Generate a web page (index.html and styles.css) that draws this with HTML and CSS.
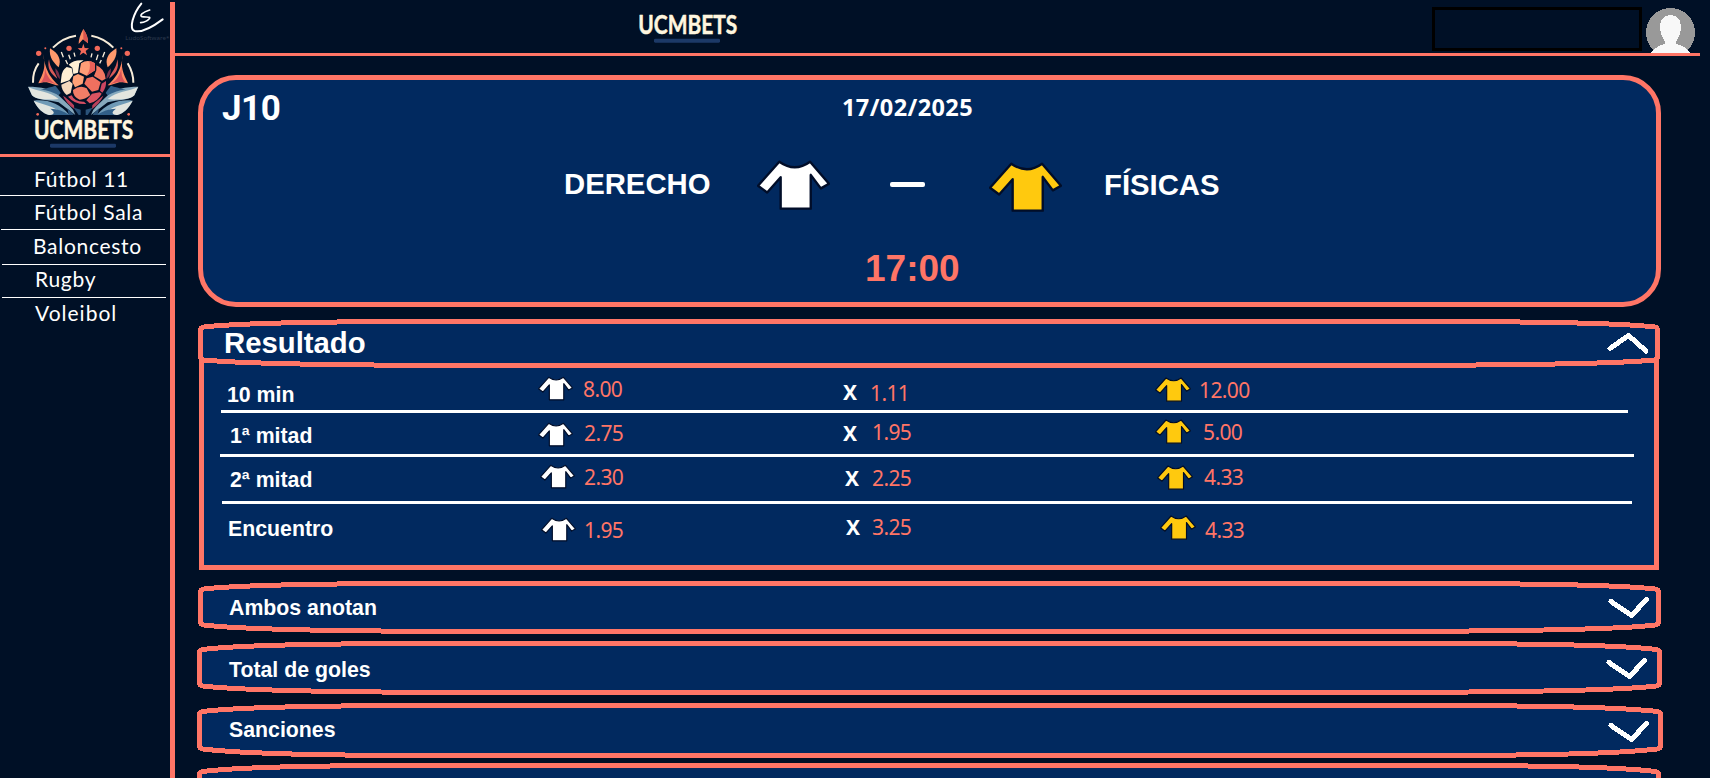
FILE: index.html
```html
<!DOCTYPE html>
<html lang="es">
<head>
<meta charset="utf-8">
<title>UCMBETS</title>
<link rel="stylesheet" href="styles.css">
</head>
<body>
<svg class="defs" width="0" height="0">
  <symbol id="shirt" viewBox="0 0 216 148">
    <path d="M66 5Q112 38 157 5L213 70L189 84L159 44V144H70V51L30 96L3 76Z" stroke="#010d28" stroke-width="7" stroke-linejoin="round"/>
  </symbol>
</svg>
<div class="app">
  <aside class="sidebar">
    <div class="brand">
      <svg width="170" height="154" viewBox="0 0 510 462">
        <g fill="none" stroke="#fff" stroke-linecap="round">
          <path d="M424 11C400 40 385 88 404 93C430 99 468 73 488 58" stroke-width="6"/>
          <path d="M449 30C425 38 418 47 426 50C440 52 455 49 447 57C441 64 430 67 422 68" stroke-width="5"/>
        </g>
        <text x="376" y="119" textLength="132" lengthAdjust="spacingAndGlyphs" class="studio">LudoSoftware*</text>
        <g fill="none" stroke="#f6ecd9" stroke-width="6">
          <path d="M159 143Q188 113 228 107M274 107Q312 114 340 143M99 248Q98 214 116 190M383 190Q400 218 400 248"/>
          <path d="M184 156L190 172M197 180L203 193M206 164L211 178M222 158L225 170M276 160L273 172M294 164L289 180M314 156L308 172M304 180L299 190" stroke-width="4"/>
        </g>
        <g fill="#f2695a">
          <circle cx="116" cy="160" r="8"/><circle cx="382" cy="160" r="8"/><circle cx="207" cy="145" r="8"/><circle cx="292" cy="145" r="8"/>
          <circle cx="136" cy="145" r="3"/><circle cx="364" cy="145" r="3"/><circle cx="113" cy="343" r="4"/><circle cx="386" cy="343" r="4"/>
          <path d="M250 131L254 144L267 145L257 153L261 166L250 158L239 166L243 153L233 145L246 144Z"/>
          <path d="M250 87Q236 112 236 132L249 118L264 130Q266 110 250 87Z" fill="#ff8b64"/>
          <path d="M250 87V118L264 130Q266 110 250 87Z" fill="#d9544f"/>
        </g>
        <g id="wing">
          <path d="M129 161C140 205 128 220 115 250C145 240 154 254 176 256C158 238 138 222 129 161Z" fill="#ff8b64"/>
          <path d="M134 195C136 225 150 245 176 256C150 246 140 243 122 248C137 230 135 215 134 195Z" fill="#d9535a"/>
          <path d="M150 145C178 162 184 180 176 202C162 190 146 172 150 145Z" fill="#ff9a6d"/>
          <path d="M147 178C150 207 165 216 172 236C152 222 140 204 147 178Z" fill="#d85b58"/>
          <path d="M166 205Q180 218 180 238Q166 226 166 205Z" fill="#78304a"/>
          <path d="M84 260C120 260 160 266 177 287C190 300 207 314 219 329L226 345L176 307C145 300 108 300 96 286Z" fill="#86a9bd"/>
          <path d="M85 261C112 275 150 274 176 297C145 300 108 300 96 286Z" fill="#e4e6df"/>
          <path d="M101 302C140 297 178 309 208 345H147C128 339 113 326 101 302Z" fill="#6f9ab6"/>
          <path d="M101 302C130 316 165 316 190 345H147C128 339 113 326 101 302Z" fill="#e0e4df"/>
          <path d="M151 326Q184 327 208 345H150Q172 341 151 326Z" fill="#315f88"/>
          <path d="M166 257Q180 274 182 279L176 286Q151 271 122 269Q150 262 166 257Z" fill="#315f88"/>
          <path d="M189 287Q205 296 222 316L223 327Q198 309 189 287Z" fill="#b9405a"/>
          <path d="M221 323L242 329V345H236ZM202 325L218 340L221 345H206Z" fill="#2a5279"/>
        </g>
        <use href="#wing" transform="matrix(-1 0 0 1 499 0)"/>
        <circle cx="250" cy="246" r="70" fill="#001026"/>
        <path d="M184 232Q185 211 200 201L215 205L219 225L208 241L182 250ZM206 194Q223 178 251 181L238 190L234 218L220 222L217 203Z" fill="#fff0d4"/>
        <path d="M184 254L208 243L218 251L212 279L200 285Q184 270 184 254Z" fill="#f4d9bd"/>
        <path d="M243 190Q263 176 285 190V211L260 227L238 217Z" fill="#ff9d77"/>
        <path d="M268 182L285 190V211L260 227Q274 207 268 182Z" fill="#e95f59"/>
        <path d="M289 196Q314 206 317 236L306 242L282 228L289 211Z" fill="#f27761"/>
        <path d="M220 229L234 222L252 230L248 251L225 262L217 246Z" fill="#ffa177"/>
        <path d="M253 251L260 235L278 230L302 247L295 270L276 275Z" fill="#f0705f"/>
        <path d="M318 243L305 251L300 272L307 278Q320 262 318 243Z" fill="#ca4560"/>
        <path d="M219 270Q241 253 260 265L271 285Q255 299 239 299Q218 290 219 270Z" fill="#f27d67"/>
        <path d="M276 281L299 277L305 281Q293 304 269 310L259 301Z" fill="#db5361"/>
        <path d="M204 290L215 286Q224 306 252 305L259 312Q224 314 204 290Z" fill="#d34d62"/>
        <text x="102" y="416" textLength="298" lengthAdjust="spacingAndGlyphs" class="wordmark">UCMBETS</text>
        <rect x="150" y="431" width="198" height="12" rx="4" fill="#1c3967"/>
      </svg>
    </div>
    <nav class="sports">
      <a class="sport s1">Fútbol 11</a>
      <a class="sport s2">Fútbol Sala</a>
      <a class="sport s3">Baloncesto</a>
      <a class="sport s4">Rugby</a>
      <a class="sport s5">Voleibol</a>
    </nav>
  </aside>
  <div class="content">
    <header class="topbar">
      <svg class="toplogo" width="100" height="50" viewBox="0 -30 300 150">
        <text x="1" y="65" textLength="297" lengthAdjust="spacingAndGlyphs" class="wordmark">UCMBETS</text>
        <rect x="48" y="80" width="198" height="12" rx="4" fill="#1c3967"/>
      </svg>
      <div class="account"></div>
      <svg class="avatar" width="49" height="45" viewBox="0 0 49 45" shape-rendering="crispEdges">
        <circle cx="24.5" cy="24.5" r="24.5" fill="#999"/>
        <path d="M24.500 7C31 7 35 11 35 19C35 27 31 31 30 34V36Q39 37 44 45H5Q10 38 19 36V34C18 31 14 27 14 19C14 11 18 7 24.500 7Z" fill="#f8f8f8"/>
      </svg>
    </header>
    <main>
      <section class="match">
        <div class="meta"><h1>J10</h1><time class="date">17/02/2025</time></div>
        <div class="teams">
          <span class="team home">DERECHO</span>
          <svg class="kit home-kit white" width="73" height="50"><use href="#shirt"/></svg>
          <span class="dash"></span>
          <svg class="kit away-kit gold" width="73" height="50"><use href="#shirt"/></svg>
          <span class="team away">FÍSICAS</span>
        </div>
        <time class="hour">17:00</time>
      </section>

      <section class="bar open">
        <svg class="frame" width="1467" height="49" viewBox="197 319 1467 49" shape-rendering="crispEdges">
          <path d="M200.500 330Q200.500 327.500 204 327C235 323.500 300 321.500 435 321.500H1420C1555 321.500 1624 323.500 1655 327Q1657.500 327.500 1657.500 330V357Q1657.500 359.500 1654 360C1620 363.500 1510 365.500 1340 365.500H500C320 365.500 240 363.500 204 360Q200.500 359.500 200.500 357Z"/>
          <path class="chev" d="M1610 348.500L1628.500 335.500L1646 351"/>
        </svg>
        <h2>Resultado</h2>
      </section>
      <div class="results">
        <div class="row r1">
          <span class="label">10 min</span>
          <div class="odd"><svg class="white" width="35" height="25"><use href="#shirt"/></svg><b>8.00</b></div>
          <div class="odd"><i>X</i><b>1.11</b></div>
          <div class="odd"><svg class="gold" width="36" height="25"><use href="#shirt"/></svg><b>12.00</b></div>
        </div>
        <hr class="h1">
        <div class="row r2">
          <span class="label">1ª mitad</span>
          <div class="odd"><svg class="white" width="35" height="25"><use href="#shirt"/></svg><b>2.75</b></div>
          <div class="odd"><i>X</i><b>1.95</b></div>
          <div class="odd"><svg class="gold" width="36" height="25"><use href="#shirt"/></svg><b>5.00</b></div>
        </div>
        <hr class="h2">
        <div class="row r3">
          <span class="label">2ª mitad</span>
          <div class="odd"><svg class="white" width="35" height="25"><use href="#shirt"/></svg><b>2.30</b></div>
          <div class="odd"><i>X</i><b>2.25</b></div>
          <div class="odd"><svg class="gold" width="36" height="25"><use href="#shirt"/></svg><b>4.33</b></div>
        </div>
        <hr class="h3">
        <div class="row r4">
          <span class="label">Encuentro</span>
          <div class="odd"><svg class="white" width="35" height="25"><use href="#shirt"/></svg><b>1.95</b></div>
          <div class="odd"><i>X</i><b>3.25</b></div>
          <div class="odd"><svg class="gold" width="36" height="25"><use href="#shirt"/></svg><b>4.33</b></div>
        </div>
      </div>

      <section class="bar b1">
        <svg class="frame" width="1467" height="53" viewBox="197 581 1467 53" shape-rendering="crispEdges">
          <path d="M200.500 592Q200.500 589.500 204 589C235 585.500 300 583.500 435 583.500H1420C1555 583.500 1624 585.500 1655 589Q1658.500 589.500 1658.500 592V622Q1658.500 624.500 1655 625C1620 629.500 1510 631.500 1340 631.500H500C320 631.500 240 629.500 204 625Q200.500 624.500 200.500 622Z"/>
          <path class="chev" d="M1611 601.500L1631.500 615.500L1646.500 599.500"/>
        </svg>
        <h3>Ambos anotan</h3>
      </section>
      <section class="bar b2">
        <svg class="frame" width="1467" height="54" viewBox="197 641 1467 54" shape-rendering="crispEdges">
          <path d="M199.500 653Q199.500 650 203 649.500C235 645.500 300 643.500 435 643.500H1420C1555 643.500 1624 645.500 1656 649.500Q1659.500 650 1659.500 653V683Q1659.500 685.500 1656 686C1620 690.500 1510 692.500 1340 692.500H500C320 692.500 240 690.500 203 686Q199.500 685.500 199.500 683Z"/>
          <path class="chev" d="M1609 662.500L1629.500 676.500L1644.500 660.500"/>
        </svg>
        <h3>Total de goles</h3>
      </section>
      <section class="bar b3">
        <svg class="frame" width="1467" height="55" viewBox="197 703 1467 55" shape-rendering="crispEdges">
          <path d="M199.500 715Q199.500 712 203 711.500C235 707.500 300 705.500 435 705.500H1420C1555 705.500 1624 707.500 1657 711.500Q1660.500 712 1660.500 715V746Q1660.500 748.500 1657 749C1620 753.500 1540 755.500 1430 755.500H430C320 755.500 240 753.500 203 749Q199.500 748.500 199.500 746Z"/>
          <path class="chev" d="M1611 725.500L1631.500 739.500L1646.500 723.500"/>
        </svg>
        <h3>Sanciones</h3>
      </section>
      <section class="bar b4">
        <svg class="frame" width="1467" height="15" viewBox="197 763 1467 15" shape-rendering="crispEdges">
          <path d="M199.500 800V775Q199.500 772 203 771.500C235 767.500 300 765.500 415 765.500H1440C1555 765.500 1624 767.500 1655 771.500Q1658.500 772 1658.500 775V800Z"/>
        </svg>
      </section>
    </main>
  </div>
</div>
</body>
</html>
```

FILE: styles.css
```css
* { box-sizing: border-box; }
body { margin: 0; height: 778px; overflow: hidden; background: #001026; color: #fff; font-family: "Liberation Sans", Arial, sans-serif; }
svg { display: block; flex: none; }
.defs { position: absolute; }
h1, h2, h3 { margin: 0; }
.app { display: grid; grid-template-columns: 175px 1fr; height: 778px; }

.sidebar { border-right: 5px solid #ff7566; margin-top: 2px; }
.brand { display: flex; height: 155px; border-bottom: 3px solid #ff7566; }
.brand svg { margin-top: -2px; }
.studio { font: 18px "Noto Sans", sans-serif; fill: #2c394d; }
.wordmark { font: bold 79px Lato, sans-serif; fill: #fff6df; stroke: #fff6df; stroke-width: 1.5; stroke-linejoin: round; }
.sports { display: flex; flex-direction: column; font: 21px/28px Lato, sans-serif; letter-spacing: .7px; }
.sport { border-bottom: 1px solid #fff; white-space: nowrap; }
.s1 { height: 39px; padding: 8px 0 0 34px; width: 165px; }
.s2 { height: 34px; padding: 2px 0 0 33px; margin-left: 1px; width: 164px; }
.s3 { height: 35px; padding: 2px 0 0 31px; margin-left: 2px; width: 164px; }
.s4 { height: 33px; padding: 0 0 0 33px; margin-left: 2px; width: 164px; }
.s5 { padding: 1px 0 0 35px; border: 0; letter-spacing: 1px; }

.content { min-width: 0; }
.topbar { display: flex; height: 56px; width: 1525px; border-bottom: 3px solid #ff7566; }
.toplogo { margin: 2px 0 0 463px; }
.account { width: 210px; height: 44px; margin: 7px 4px 0 694px; border: 3px solid #000; }
.avatar { margin-top: 8px; }

.match { width: 1463px; height: 232px; margin: 19px 0 0 23px; border: 5px solid #ff7566; border-radius: 38px; background: #01295f; }
.meta { display: flex; height: 75px; font-family: "Noto Sans", sans-serif; }
.meta h1 { width: 639px; padding: 8px 0 0 19px; font: bold 35px/42px Roboto, sans-serif; letter-spacing: -.5px; }
.date { padding-top: 13px; font-size: 23.500px; line-height: 28px; font-weight: bold; letter-spacing: .4px; }
.teams { display: flex; height: 87px; font-size: 29.300px; line-height: 32px; font-weight: bold; }
.home { margin: 13px 0 0 361px; width: 146px; }
.home-kit { margin: 5px 0 0 47px; }
.dash { width: 35px; height: 5px; margin: 27px 0 0 60px; border-radius: 2px; background: #fff; }
.away-kit { margin: 7px 0 0 64px; }
.away { margin: 14px 0 0 42px; }
.hour { display: block; margin: 7px 0 0 662px; font-size: 37px; line-height: 40px; font-weight: bold; color: #ff7566; }
.white { fill: #fff; }
.gold { fill: #ffc90e; }

.bar { display: grid; width: 1467px; margin-left: 22px; }
.bar > * { grid-area: 1 / 1; }
.frame { overflow: visible; }
.frame path { fill: #01295f; stroke: #ff7566; stroke-width: 5; }
.frame .chev { fill: none; stroke: #fff; stroke-linecap: round; stroke-linejoin: round; }
.bar h2 { padding: 8px 0 0 27px; font-size: 29.300px; line-height: 32px; z-index: 1; }
.bar h3 { padding-left: 32px; font-size: 21.300px; line-height: 24px; z-index: 1; }
.open { position: relative; z-index: 1; margin-top: 12px; height: 49px; }
.b1 { margin-top: 11px; height: 53px; }
.b1 h3 { padding-top: 15px; }
.b2 { margin-top: 7px; height: 54px; }
.b2 h3 { padding-top: 17px; }
.b3 { margin-top: 8px; height: 55px; }
.b3 h3 { padding-top: 15px; }
.b4 { margin-top: 5px; height: 15px; overflow: hidden; }

.results { width: 1460px; height: 211px; margin: -9px 0 0 24px; padding-top: 9px; border: solid #ff7566; border-width: 0 5px 5px; background: #01295f; }
.row { display: grid; grid-template-columns: 310px 305px 313px 1fr; padding-left: 16px; }
.odd { display: grid; grid-template-columns: 50px 1fr; align-items: start; }
.label { font-size: 21.300px; line-height: 24px; font-weight: bold; margin-left: 7px; }
.odd b { font: 21px/24px "Noto Sans", sans-serif; letter-spacing: -.6px; color: #ff7566; }
.odd i { font: bold 21px/24px "Noto Sans", sans-serif; }
.results hr { height: 3px; border: 0; background: #fff; }
.h1 { margin: 0 0 0 17px; width: 1407px; }
.h2 { margin: 0 0 0 16px; width: 1414px; }
.h3 { margin: 0 0 0 18px; width: 1410px; }

.r1 { height: 42px; }
.r1 .label { margin-top: 15px; }
.r1 .odd svg { margin: 8px 0 0 8px; }
.r1 .odd b { margin: 9px 0 0 3px; }
.r1 .odd i { margin: 12px 0 0 8px; }
.r1 .odd i + b { margin: 13px 0 0 -15px; }
.r1 .odd .gold { margin: 9px 0 0 7px; }
.r1 .odd .gold + b { margin: 10px 0 0 1px; }

.r2 { height: 41px; }
.r2 .label { margin: 11px 0 0 10px; }
.r2 .odd svg { margin: 9px 0 0 8px; }
.r2 .odd b { margin: 8px 0 0 4px; }
.r2 .odd i { margin: 8px 0 0 8px; }
.r2 .odd i + b { margin: 7px 0 0 -13px; }
.r2 .odd .gold { margin: 6px 0 0 7px; }
.r2 .odd .gold + b { margin: 7px 0 0 5px; }

.r3 { height: 44px; }
.r3 .label { margin: 11px 0 0 10px; }
.r3 .odd svg { margin: 7px 0 0 10px; }
.r3 .odd b { margin: 8px 0 0 4px; }
.r3 .odd i { margin: 9px 0 0 10px; }
.r3 .odd i + b { margin: 9px 0 0 -13px; }
.r3 .odd .gold { margin: 8px 0 0 9px; }
.r3 .odd .gold + b { margin: 8px 0 0 6px; }

.r4 { height: 61px; }
.r4 .label { margin: 13px 0 0 8px; }
.r4 .odd svg { margin: 13px 0 0 11px; }
.r4 .odd b { margin: 14px 0 0 4px; }
.r4 .odd i { margin: 11px 0 0 11px; }
.r4 .odd i + b { margin: 11px 0 0 -13px; }
.r4 .odd .gold { margin: 11px 0 0 12px; }
.r4 .odd .gold + b { margin: 14px 0 0 7px; }
```
